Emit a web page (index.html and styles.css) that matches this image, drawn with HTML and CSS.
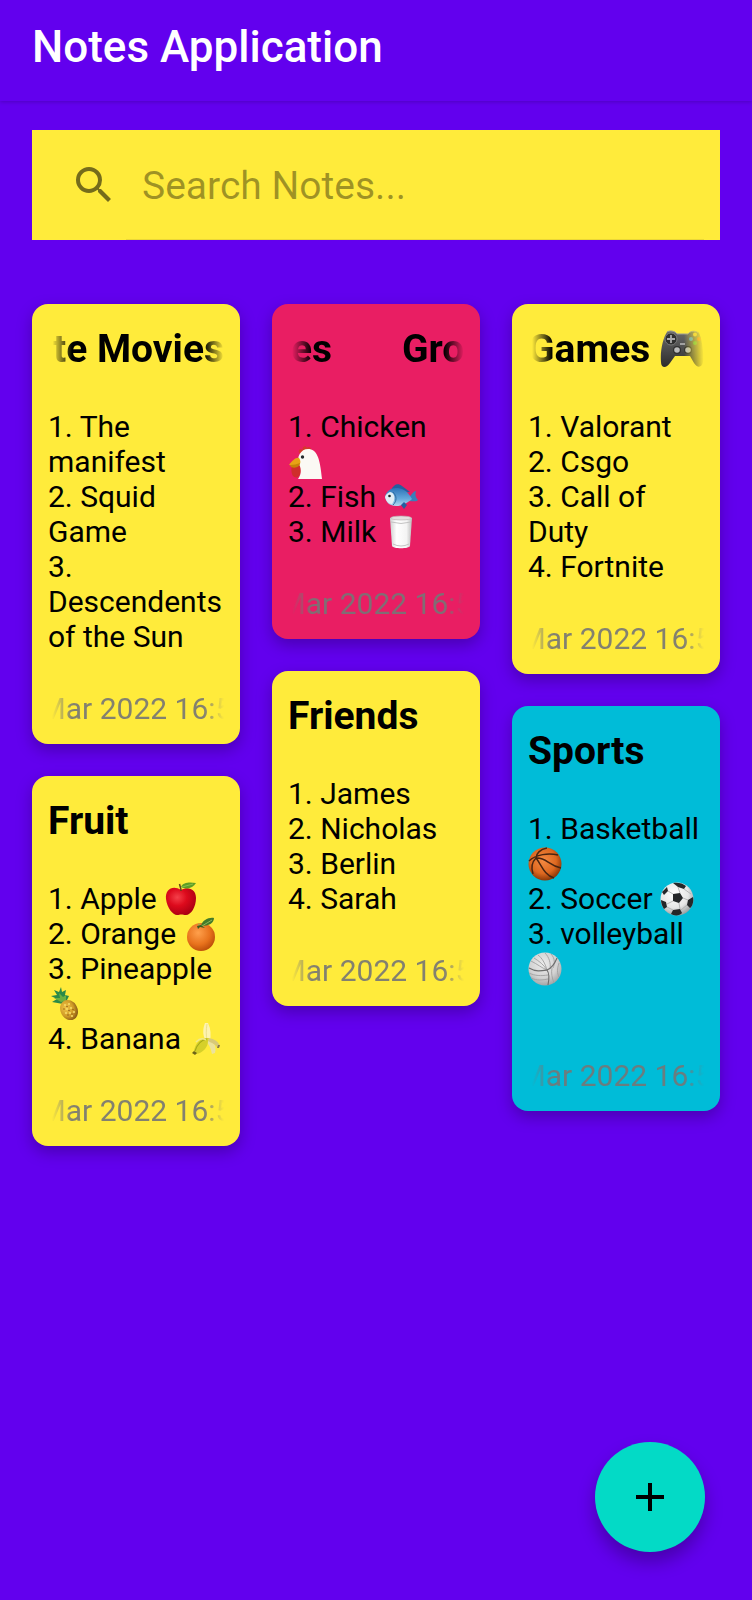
FILE: index.html
```html
<!DOCTYPE html>
<html lang="en">
<head>
<meta charset="utf-8">
<meta name="viewport" content="width=device-width, initial-scale=1">
<title>Notes Application</title>
<link rel="stylesheet" href="styles.css">
</head>
<body>
<svg class="sprite" aria-hidden="true">
  <defs>
    <radialGradient id="g-red" cx=".38" cy=".35" r=".7"><stop offset="0" stop-color="#f5404a"/><stop offset=".45" stop-color="#dd0a1c"/><stop offset="1" stop-color="#a80012"/></radialGradient>
    <radialGradient id="g-orange" cx=".4" cy=".35" r=".7"><stop offset="0" stop-color="#ffa04c"/><stop offset=".6" stop-color="#e8721c"/><stop offset="1" stop-color="#b84a08"/></radialGradient>
    <radialGradient id="g-ball" cx=".45" cy=".4" r=".6"><stop offset="0" stop-color="#f58a42"/><stop offset=".65" stop-color="#dd6820"/><stop offset="1" stop-color="#8d3808"/></radialGradient>
    <radialGradient id="g-white" cx=".42" cy=".35" r=".7"><stop offset="0" stop-color="#fff"/><stop offset=".6" stop-color="#e6e6e6"/><stop offset="1" stop-color="#8f9496"/></radialGradient>
    <radialGradient id="g-grey" cx=".45" cy=".35" r=".7"><stop offset="0" stop-color="#ececec"/><stop offset=".6" stop-color="#d2d2d2"/><stop offset="1" stop-color="#989c9e"/></radialGradient>
    <linearGradient id="g-fish" x1="0" y1="0" x2="0" y2="1"><stop offset="0" stop-color="#2d74b8"/><stop offset=".6" stop-color="#65a9dc"/><stop offset="1" stop-color="#b6d9ef"/></linearGradient>
    <linearGradient id="g-glass"><stop offset="0" stop-color="#cfcfcf"/><stop offset=".3" stop-color="#fff"/><stop offset=".75" stop-color="#f4f4f4"/><stop offset="1" stop-color="#bcbcbc"/></linearGradient>
    <radialGradient id="g-pine" cx=".4" cy=".35" r=".7"><stop offset="0" stop-color="#f2c648"/><stop offset=".6" stop-color="#cf9a26"/><stop offset="1" stop-color="#7f4f12"/></radialGradient>
    <linearGradient id="g-pad" x1="0" y1="0" x2="0" y2="1"><stop offset="0" stop-color="#6a6a6a"/><stop offset=".5" stop-color="#4c4c4c"/><stop offset="1" stop-color="#2c2c2c"/></linearGradient>
  </defs>
  <symbol id="chicken" viewBox="0 0 34 34">
    <path d="M11 8C10 5 12 3 14.500 5C14 1 18 0 19 3C20 1 24 2 23 6Z" fill="#d53a2b"/>
    <path d="M7 18C3 19 3 25 4 29C5 33 11 34 12 29C14 26 12 19 10 17Z" fill="#cf2e2b"/>
    <path d="M10 34C13 30 14 25 11 19C8 12 13 4 20 4C29 4 32 13 34 34Z" fill="#fbf9f4"/>
    <path d="M1 20C4 16 8 12 11 13C13 16 13 19 10 21C7 23 4 20 1 20Z" fill="#e8a315"/>
    <path d="M2 20C6 20 9 19 12 18C12 21 8 24 3 22Z" fill="#c88208"/>
    <circle cx="14.500" cy="12" r="1.700" fill="#262b2e"/>
  </symbol>
  <symbol id="fish" viewBox="0 0 34 34">
    <path d="M7 10C10 4 14 3 18 6L26 12L14 13Z" fill="#255f9f"/>
    <path d="M24 18C28 15 29 11 32 11C31 14 31 17 34 20C33 22 29 21 24 21Z" fill="#397fba"/>
    <path d="M1 17C3 8 12 6 20 10C24 12 26 16 28 19C22 24 14 28 7 25C4 24 2 21 1 17Z" fill="url(#g-fish)"/>
    <path d="M17 25L20 29L23 25L20 22Z" fill="#255f9f"/>
    <path d="M1 17C2 14 4 13 6 12C11 13 12 19 8 24C4 24 2 21 1 17Z" fill="#e1edf4"/>
    <path d="M9 12C13 16 13 21 9 25" fill="none" stroke="#316d9f" stroke-width="1"/>
    <circle cx="5.500" cy="16" r="1.300" fill="#1c252c"/>
  </symbol>
  <symbol id="milk" viewBox="0 0 34 34">
    <path d="M6 3H28L26 31C25 34 9 34 8 31Z" fill="url(#g-glass)"/>
    <ellipse cx="17" cy="3" rx="10.500" ry="2" fill="#e4dfdf" stroke="#b5afaf" stroke-width=".6"/>
    <path d="M7 7Q17 10 27 7" fill="none" stroke="#c4c4c4" stroke-width="1"/>
    <path d="M9 29Q17 33 25 29" fill="none" stroke="#c4c4c4" stroke-width="1"/>
  </symbol>
  <symbol id="apple" viewBox="0 0 34 34">
    <path d="M17 8C9 3 1 7 2 17C3 26 9 33 13 33C15 33 16 32.500 17 32.500C19 32.500 20 33 22 33C27 33 32 25 32 16C32 7 24 4 17 8Z" fill="url(#g-red)"/>
    <path d="M17 9C17 6 16 4 15.500 2" fill="none" stroke="#654218" stroke-width="1.500"/>
    <path d="M17 5C19 0 26 0 32 1C29 6 23 8 17 5Z" fill="#5e9e25"/>
    <path d="M18 5L29 2" stroke="#95c551" stroke-width=".8"/>
  </symbol>
  <symbol id="orange" viewBox="0 0 34 34">
    <circle cx="17" cy="20" r="14" fill="url(#g-orange)"/>
    <path d="M17 9C18 3 25 0 30 1C30 6 25 9 17 9Z" fill="#437a2a"/>
    <path d="M14 7L18 9L28 3" fill="none" stroke="#8db657" stroke-width="1"/>
    <path d="M13 9L17 8L21 11L16 10L14 12Z" fill="#385d1d"/>
  </symbol>
  <symbol id="pineapple" viewBox="0 0 34 34">
    <path d="M15 17L4 15L9 12L3 9L9 8L6 3L11 5L13 0L14 5L18 3L17 8L21 9L18 15Z" fill="#2b8a48"/>
    <path d="M13 15L6 11L12 11L11 6L15 10L18 8L18 14Z" fill="#6ab040"/>
    <ellipse cx="21" cy="23" rx="8.500" ry="10.500" transform="rotate(-28 21 23)" fill="url(#g-pine)"/>
    <g fill="#f6dc6a"><circle cx="17" cy="18" r="1"/><circle cx="21" cy="17" r="1"/><circle cx="19" cy="22" r="1"/><circle cx="23" cy="21" r="1"/><circle cx="26" cy="25" r="1"/><circle cx="22" cy="26" r="1"/><circle cx="18" cy="26" r="1"/><circle cx="24" cy="29" r="1"/></g>
    <g fill="#94621a"><circle cx="19" cy="19.500" r=".8"/><circle cx="16" cy="22" r=".8"/><circle cx="21" cy="23.500" r=".8"/><circle cx="25" cy="22.500" r=".8"/><circle cx="20" cy="28" r=".8"/><circle cx="24" cy="27" r=".8"/></g>
  </symbol>
  <symbol id="banana" viewBox="0 0 34 34">
    <path d="M18 19C14 13 15 6 17 1L20 1C23 7 23 13 22 19Z" fill="#fdf3b0"/>
    <path d="M19 2C18 8 18 13 19 18" fill="none" stroke="#e6d982" stroke-width=".8"/>
    <path d="M20 17C26 20 29 24 27 31L24 32C23 28 22 23 18 20Z" fill="#ece29c"/>
    <path d="M21 16C26 17 30 19 32 24L30 26C27 22 24 21 20 19Z" fill="#d8c978"/>
    <path d="M21 16C13 15 7 21 6 29L8 32C15 31 20 25 20 19Z" fill="#d6d02a"/>
    <path d="M19 17C13 18 9 23 7 29" stroke="#a5a818" stroke-width="1.200" fill="none"/>
    <path d="M18 18C15 16 11 17 8 20" stroke="#f1e88d" stroke-width="1.500" fill="none"/>
    <path d="M6 29L9 31L7 33L4 31Z" fill="#6d6418"/><path d="M30 23L32 23L31 26L29 26Z" fill="#8c7b45"/>
  </symbol>
  <symbol id="basketball" viewBox="0 0 34 34">
    <circle cx="17" cy="17" r="16.500" fill="url(#g-ball)"/>
    <path d="M1 14C8 7 21 6 30 8M8 11C8 7 12 2 19 1M8 11C13 17 16 28 26 31M8 11C18 10 20 18 33 21M8 11C4 15 3 21 5 27" fill="none" stroke="#4a2410" stroke-width="1.500"/>
  </symbol>
  <symbol id="soccer" viewBox="0 0 34 34">
    <circle cx="17" cy="17" r="16.500" fill="url(#g-white)"/>
    <path d="M13 12L20 11L23 16L19 21L13 19ZM13 1C17 0 23 1 26 4L24 7L18 5ZM2 10L7 5L8 9L4 13ZM1 18L6 20L7 25L4 27C2 24 1 21 1 18ZM13 28L20 27L22 31C20 34 14 34 11 32ZM28 18L33 15C34 20 32 25 30 26L27 23Z" fill="#252729"/>
    <path d="M18 5L20 11M13 12L8 9M13 19L7 22M19 21L20 27M23 16L28 18M24 7L31 12M13 28L7 25M27 23L21 28" stroke="#aaa" stroke-width=".8"/>
  </symbol>
  <symbol id="volleyball" viewBox="0 0 34 34">
    <circle cx="17" cy="17" r="16.500" fill="url(#g-grey)"/>
    <path d="M3 9C9 12 14 16 19 18M10 3C14 6 17 11 19 18M6 6C11 9 16 13 19 18M17 1C21 5 23 11 22 17M23 2C27 6 27 12 25 16M1 21C7 24 13 24 20 23M3 26C9 29 15 28 20 27M26 31C24 26 23 21 24 16M31 25C29 21 29 17 31 11" fill="none" stroke="#a0a0a0" stroke-width=".9"/>
    <path d="M1 16C8 20 13 19 19 18C24 16 27 11 29 6M19 18C22 22 21 28 20 33" fill="none" stroke="#6c6c6c" stroke-width="1.100"/>
  </symbol>
  <symbol id="gamepad" viewBox="0 0 44 38">
    <path d="M7 2C10 0 15 1 17 4H28C31 0 36 1 39 3C42 8 44 25 43 32C42 38 37 38 34 33L30 26H15L10 33C6 39 1 38 1 32C0 21 3 8 7 2Z" fill="url(#g-pad)"/>
    <path d="M7 2C10 0 15 1 17 4L28 4C31 0 36 1 39 3" fill="none" stroke="#999" stroke-width="1"/>
    <circle cx="11" cy="9" r="6" fill="#303030" stroke="#888" stroke-width=".8"/>
    <path d="M11 5V13M7 9H15" stroke="#aaa" stroke-width="1.800"/>
    <circle cx="17" cy="20" r="4" fill="#303030"/><circle cx="17" cy="20" r="2.800" fill="#bbb"/>
    <circle cx="28" cy="20" r="4" fill="#303030"/><circle cx="28" cy="20" r="2.800" fill="#bbb"/>
    <circle cx="35" cy="4.500" r="2" fill="#e8c640"/><circle cx="31" cy="9" r="2" fill="#4b9fd0"/><circle cx="39" cy="9" r="2" fill="#e53a25"/><circle cx="35" cy="13" r="2" fill="#39ad4b"/>
    <path d="M20 14H25" stroke="#bbb" stroke-width="1.500"/>
  </symbol>
</svg>

<header class="app-bar"><h1 class="app-title">Notes Application</h1></header>

<main class="page">
  <form class="search" role="search">
    <label class="search-label" for="q" aria-label="Search Notes">
      <svg class="search-icon" viewBox="0 0 24 24" aria-hidden="true"><path d="M15.500 14h-.79l-.28-.27A6.471 6.471 0 0 0 16 9.500 6.500 6.500 0 1 0 9.500 16c1.610 0 3.090-.59 4.230-1.570l.27.28v.79l5 4.990L20.490 19l-4.990-5zm-6 0C7.010 14 5 11.990 5 9.500S7.010 5 9.500 5 14 7.010 14 9.500 11.990 14 9.500 14z"/></svg>
    </label>
    <input class="search-input" id="q" type="text" placeholder="Search Notes...">
  </form>

  <section class="notes" aria-label="Notes">
    <div class="column">
      <article class="note yellow">
        <h2 class="note-title marquee at-end"><span>Favourite Movies</span></h2>
        <ol class="note-body"><li>1. The manifest</li><li>2. Squid Game</li><li>3. Descendents of the Sun</li></ol>
        <p class="note-date marquee"><span>Mar 2022 16:5</span></p>
      </article>
      <article class="note yellow">
        <h2 class="note-title">Fruit</h2>
        <ol class="note-body">
          <li>1. Apple <svg class="emoji" role="img" aria-label="apple"><use href="#apple"/></svg></li>
          <li>2. Orange <svg class="emoji" role="img" aria-label="orange"><use href="#orange"/></svg></li>
          <li>3. Pineapple <svg class="emoji" role="img" aria-label="pineapple"><use href="#pineapple"/></svg></li>
          <li>4. Banana <svg class="emoji" role="img" aria-label="banana"><use href="#banana"/></svg></li>
        </ol>
        <p class="note-date marquee"><span>Mar 2022 16:5</span></p>
      </article>
    </div>
    <div class="column">
      <article class="note pink">
        <h2 class="note-title marquee looping"><span>Groceries</span><span>Groceries</span></h2>
        <ol class="note-body">
          <li>1. Chicken <svg class="emoji" role="img" aria-label="chicken"><use href="#chicken"/></svg></li>
          <li>2. Fish <svg class="emoji" role="img" aria-label="fish"><use href="#fish"/></svg></li>
          <li>3. Milk <svg class="emoji" role="img" aria-label="glass of milk"><use href="#milk"/></svg></li>
        </ol>
        <p class="note-date marquee"><span>Mar 2022 16:5</span></p>
      </article>
      <article class="note yellow">
        <h2 class="note-title">Friends</h2>
        <ol class="note-body"><li>1. James</li><li>2. Nicholas</li><li>3. Berlin</li><li>4. Sarah</li></ol>
        <p class="note-date marquee"><span>Mar 2022 16:5</span></p>
      </article>
    </div>
    <div class="column">
      <article class="note yellow">
        <h2 class="note-title marquee at-start"><span>Games <svg class="emoji-large" role="img" aria-label="game controller"><use href="#gamepad"/></svg></span></h2>
        <ol class="note-body"><li>1. Valorant</li><li>2. Csgo</li><li>3. Call of Duty</li><li>4. Fortnite</li></ol>
        <p class="note-date marquee"><span>Mar 2022 16:5</span></p>
      </article>
      <article class="note cyan">
        <h2 class="note-title">Sports</h2>
        <ol class="note-body">
          <li>1. Basketball <svg class="emoji" role="img" aria-label="basketball"><use href="#basketball"/></svg></li>
          <li>2. Soccer <svg class="emoji" role="img" aria-label="soccer ball"><use href="#soccer"/></svg></li>
          <li>3. volleyball <svg class="emoji" role="img" aria-label="volleyball"><use href="#volleyball"/></svg></li>
          <li><br></li>
        </ol>
        <p class="note-date marquee"><span>Mar 2022 16:5</span></p>
      </article>
    </div>
  </section>
</main>

<button class="fab" type="button" aria-label="Add note">
  <svg class="fab-icon" viewBox="0 0 28 28" aria-hidden="true"><path d="M12 0h4v12h12v4H16v12h-4V16H0v-4h12z"/></svg>
</button>
</body>
</html>
```

FILE: styles.css
```css
* {
  box-sizing: border-box;
}

body {
  margin: 0;
  min-height: 100vh;
  background: #6200ee;
  color: #000;
  font-family: Roboto, "Noto Sans", sans-serif;
}

h1, h2, p, ol {
  margin: 0;
  padding: 0;
}

.sprite {
  position: absolute;
  width: 0;
  height: 0;
}

.app-bar {
  padding: 22px 32px 29px;
  box-shadow: 0 1px 4px rgba(0, 0, 0, 0.2);
}

.app-title {
  color: #fff;
  font-size: 44px;
  line-height: 50px;
  font-weight: 500;
}

.page {
  padding: 29px 32px 176px;
}

.search {
  display: flex;
  align-items: center;
  height: 110px;
  padding: 0 16px 0 38px;
  background: #ffeb3b;
}

.search-label {
  display: flex;
  padding-right: 8px;
}

.search-icon {
  width: 48px;
  height: 48px;
  fill: rgba(0, 0, 0, 0.54);
}

.search-input {
  flex: 1;
  min-width: 0;
  height: 100%;
  padding: 2px 16px 0;
  border: 0;
  border-bottom: 1px solid #ead637;
  outline: 0;
  background: transparent;
  color: #000;
  font: 400 39px/46px Roboto, "Noto Sans", sans-serif;
}

.search-input::placeholder {
  color: rgba(0, 0, 0, 0.38);
  opacity: 1;
}

.notes {
  display: grid;
  grid-template-columns: repeat(3, minmax(0, 1fr));
  align-items: start;
  gap: 32px;
  margin-top: 64px;
}

.column {
  display: flex;
  flex-direction: column;
  gap: 32px;
}

.note {
  padding: 22px 16px 18px;
  border-radius: 16px;
  box-shadow: 0 6px 16px rgba(0, 0, 0, 0.26);
}

.yellow { background: #ffeb3b; }
.pink { background: #e91e63; }
.cyan { background: #00bcd8; }

.note-title {
  font-size: 39px;
  line-height: 46px;
  font-weight: 700;
}

.note-body {
  margin: 37px 0;
  list-style: none;
  font-size: 30px;
  line-height: 35px;
}

.note-date {
  color: rgba(118, 118, 118, 0.9);
  font-size: 30px;
  line-height: 35px;
}

.marquee {
  display: flex;
  justify-content: center;
  overflow: hidden;
  white-space: nowrap;
  mask-image: linear-gradient(to right, transparent 4px, #000 24px, #000 calc(100% - 20px), transparent);
}

.marquee.at-start { justify-content: flex-start; }
.marquee.at-end { justify-content: flex-end; }

.marquee.looping {
  gap: 70px;
  padding-right: 18px;
}

.emoji {
  width: 34px;
  height: 34px;
  vertical-align: -7px;
}

.emoji-large {
  width: 44px;
  height: 38px;
  vertical-align: -6px;
}

.fab {
  position: fixed;
  right: 47px;
  bottom: 48px;
  display: flex;
  align-items: center;
  justify-content: center;
  width: 110px;
  height: 110px;
  padding: 0;
  border: 0;
  border-radius: 50%;
  background: #03dac6;
  box-shadow: 0 10px 18px rgba(0, 0, 0, 0.28);
}

.fab-icon {
  width: 28px;
  height: 28px;
}
```
